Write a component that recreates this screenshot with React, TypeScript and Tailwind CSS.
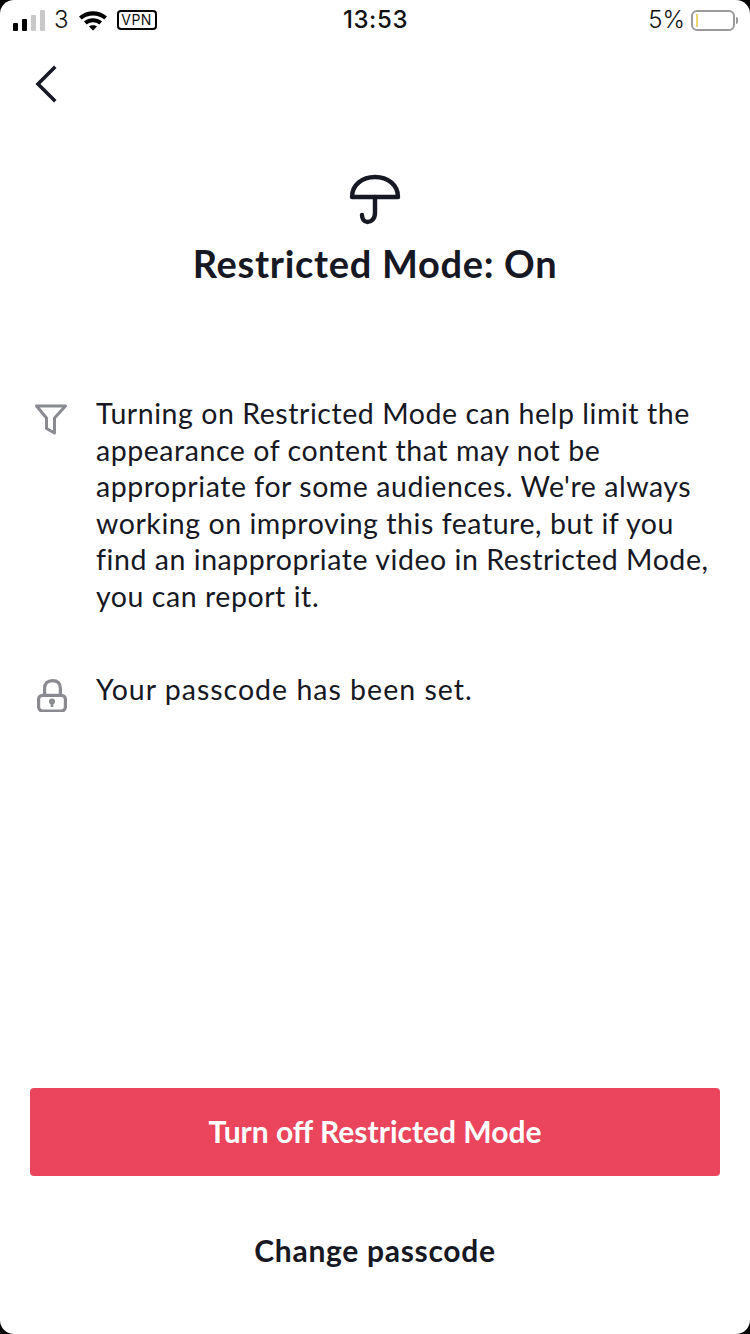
const FONT = "font-['Lato','Noto_Sans',sans-serif]"

function StatusBar() {
  return (
    <div className="flex h-10 items-center justify-between pl-[13px] pr-[12px] font-['Inter',sans-serif] text-[#111]">
      <div className="flex w-[200px] items-center">
        <div className="flex items-end gap-[4px]">
          <span className="h-[8px] w-[5px] rounded-[1px] bg-black" />
          <span className="h-[12px] w-[5px] rounded-[1px] bg-black" />
          <span className="h-[16px] w-[5px] rounded-[1px] bg-[#c8c8c8]" />
          <span className="h-[21px] w-[5px] rounded-[1px] bg-[#c8c8c8]" />
        </div>
        <span className="ml-[9px] text-[24px] leading-none font-light">3</span>
        <svg className="ml-[9px]" width="30" height="22" viewBox="0 0 30 22">
          <path d="M1 7.500C9 0.500 21 0.500 29 7.500L26.300 10.500C19.800 5 10.200 5 3.700 10.500Z" fill="#000" />
          <path d="M6 12.500C11 8.200 19 8.200 24 12.500L21.300 15.400C17.500 12.400 12.500 12.400 8.700 15.400Z" fill="#000" />
          <path d="M11 17.400C13.200 15.700 16.800 15.700 19 17.400L15 21.500Z" fill="#000" />
        </svg>
        <span className="ml-[9px] flex h-[20px] w-[40px] items-center justify-center rounded-[4px] border-2 border-black text-[14px] leading-none tracking-[0.5px]">VPN</span>
      </div>
      <span className="text-[24px] leading-none font-medium tracking-[0.6px]">13:53</span>
      <div className="flex w-[200px] items-center justify-end">
        <span className="text-[24px] leading-none font-light">5%</span>
        <div className="ml-[6px] flex h-[21px] w-[44px] items-center rounded-[6px] border-2 border-[#9a9a9a] pl-[3px]">
          <span className="h-[13px] w-[2px] bg-[#ecd56a]" />
        </div>
        <span className="ml-[1px] h-[7px] w-[2px] rounded-r-[2px] bg-[#9a9a9a]" />
      </div>
    </div>
  )
}

export default function App() {
  return (
    <div className="h-[1334px] w-[750px] overflow-hidden bg-black">
      <div className={`flex h-full w-full flex-col rounded-[14px] bg-white text-[#161823] ${FONT}`}>
        <StatusBar />

        <div className="px-[33px] pt-[25px]">
          <svg width="26" height="38" viewBox="0 0 26 38" fill="none" stroke="#161823" strokeWidth="3.600">
            <path d="M21 3L5 19L21 35" strokeLinecap="square" />
          </svg>
        </div>

        <div className="mt-[68px] flex flex-col items-center">
          <svg width="54" height="54" viewBox="0 0 54 54" fill="none" stroke="#161823" strokeWidth="4.400" strokeLinecap="round" strokeLinejoin="round">
            <path d="M4 26C4 14 14 6 27 6C40 6 50 14 50 26Z" />
            <path d="M27 26V42C27 48 23 51 19.500 51C16 51 14 48 14 44" />
          </svg>
          <h1 className="mt-[16px] text-[38px] leading-[44px] font-bold tracking-[0.7px]">Restricted Mode: On</h1>
        </div>

        <div className="mt-[110px] flex gap-[26px] pl-[34px] pr-[30px]">
          <svg className="mt-[6px] shrink-0" width="36" height="36" viewBox="0 0 36 36" fill="none" stroke="#8a8b91" strokeWidth="3" strokeLinejoin="round">
            <path d="M2.500 5H31.500L20.500 17V32L12.500 27.500V17Z" />
          </svg>
          <p className="text-[28.500px] leading-[36.500px] tracking-[0.55px]">
            Turning on Restricted Mode can help limit the appearance of content that may not be appropriate for some audiences. We're always working on improving this feature, but if you find an inappropriate video in Restricted Mode, you can report it.
          </p>
        </div>

        <div className="mt-[57px] flex gap-[26px] pl-[34px] pr-[30px]">
          <svg className="mt-[3px] shrink-0" width="36" height="38" viewBox="0 0 36 38" fill="none" stroke="#8a8b91" strokeWidth="3.200">
            <rect x="4.600" y="21.300" width="26.800" height="15.800" rx="4" />
            <path d="M10.600 21V14.500C10.600 9.500 13.500 6.600 18.500 6.600C23.500 6.600 26.400 9.500 26.400 14.500V21" />
            <circle cx="18" cy="27.500" r="3" fill="#8a8b91" stroke="none" />
            <path d="M18 28V33" strokeWidth="2.600" />
          </svg>
          <p className="text-[28.500px] leading-[36.500px] tracking-[1px]">Your passcode has been set.</p>
        </div>

        <div className="mt-auto flex flex-col px-[30px] pb-[63px]">
          <button className="h-[88px] rounded-[4px] bg-[#ea455c] pb-[2px] text-[30px] font-bold text-white">Turn off Restricted Mode</button>
          <button className="mt-[53px] text-[30px] leading-[42px] font-bold tracking-[0.7px]">Change passcode</button>
        </div>
      </div>
    </div>
  )
}
